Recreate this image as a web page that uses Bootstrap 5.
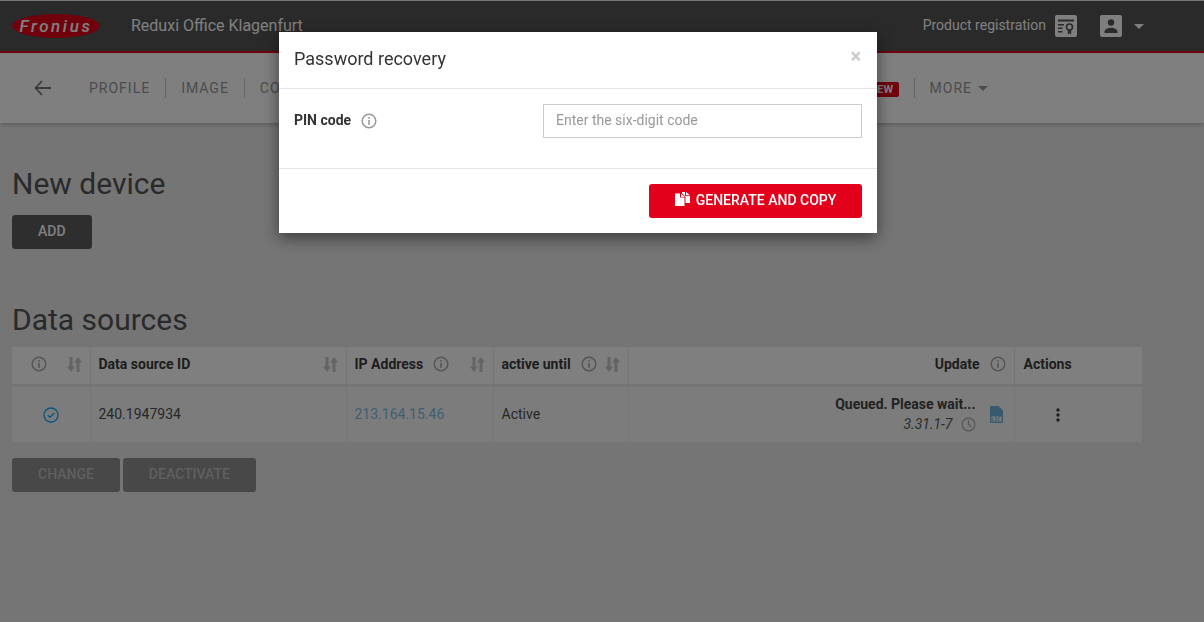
<!DOCTYPE html>
<html lang="en">
<head>
<meta charset="utf-8">
<title>Password recovery</title>
<link href="https://cdn.jsdelivr.net/npm/bootstrap@5.3.0/dist/css/bootstrap.min.css" rel="stylesheet">
<style>
html,body{height:100%;overflow:hidden}
body{font-family:Roboto,"Liberation Sans",sans-serif;font-size:14px;color:#505050;background:#ebebeb}
.top-bar{margin-top:1px;height:52px;background:#545454;border-bottom:2px solid #e2001a;padding:0 60px 0 12px;color:#fff}
.logo-oval{width:88px;height:24px;border-radius:50%;background:#e2001a;color:#fff;font-style:italic;font-weight:500;font-size:17px;letter-spacing:2.600px;line-height:24px;text-align:center;margin-right:31px}
.site-name{font-size:16px;color:#fff}
.reg-link{font-size:14px;color:#fff;margin-right:9px;padding-bottom:2px}
.tile{width:22px;height:22px;display:block}
.tile-gap{margin-left:23px}
.caret-down{width:0;height:0;border:5px solid transparent;border-top-color:currentColor;border-bottom:0}
.caret-gap{margin-left:12px;color:#fff}
.sub-bar{height:70px;background:#fff;padding-left:34px;padding-right:201px;box-shadow:0 2px 4px rgba(0,0,0,.2)}
.sub-link{font-size:14px;letter-spacing:1px;color:#999;text-decoration:none;padding:0 15px;border-right:1px solid #c8c8c8;line-height:20px;white-space:nowrap}
.sub-link.last{border-right:0}
.back-ico{width:18px;height:16px;margin-right:22px}
.new-tag{background:#e2001a;color:#fff;font-size:11px;font-weight:700;border-radius:2px;padding:1px 5px 1px 3px;letter-spacing:.3px;line-height:13px;margin-left:4px}
.more-caret{margin-left:6px;border-width:5.500px;border-bottom:0}
.page-main{padding:0 12px}
.sec-title{font-size:30px;font-weight:400;color:#555;line-height:36px;margin:0 0 13px}
.first-title{padding-top:43px}
.gap-title{margin-top:53px;margin-bottom:9px}
.btn-dark-sq{background:#5c5c5c;color:#fff;border:0;border-radius:3px;height:34px;font-size:14px;font-weight:500;padding:0 26px 1px;opacity:1}
.btn-dark-sq:disabled{background:#909090;color:#bebebe;opacity:1}
.src-table{width:1130px;table-layout:fixed;margin:0;--bs-table-bg:#fff;color:#505050}
.src-table th{height:38px;padding:0 8px 2px;font-weight:700;font-size:14px;border-right:1px solid #ececec;border-bottom:3px solid #ebebeb;vertical-align:middle;color:#3c3c3c}
.src-table td{height:57px;padding:0 8px;font-size:14px;border-right:1px solid #ececec;border-bottom:1px solid #ececec;vertical-align:middle;background:#f8f8f8}
.src-table th:last-child,.src-table td:last-child{border-right:0;padding-left:9px}
.ico-i{width:16px;height:16px;flex:none;color:#aaa;margin-left:10px}
.ico-first{margin-left:11px}
.ico-sort{width:15px;height:15px;flex:none;color:#c8c8c8}
.ip-link{color:#80bfe4;text-decoration:none}
.queued{font-weight:700;line-height:20px;color:#444}
.ver{font-style:italic;line-height:20px;color:#555}
.doc-ico{margin-left:14px;margin-right:3px;flex:none}
.dots-ico{margin-left:-42px}
.actions-note{margin-top:15px}
.modal-box{width:598px;max-width:598px;margin:32px 0 0 279px}
.modal-box .modal-content{border:0;border-radius:0;box-shadow:0 5px 15px rgba(0,0,0,.5);height:201px}
.modal-box .modal-header{height:57px;padding:0 15px 3px;border-bottom:1px solid #e5e5e5}
.modal-box .modal-title{font-size:18px;font-weight:400;color:#333}
.x-close{background:none;border:0;padding:0;font-size:20px;font-weight:700;line-height:1;color:#c8c8c8;margin-top:-6px;margin-right:1px}
.modal-box .modal-body{height:80px;flex:none;padding:15px;border-bottom:1px solid #e5e5e5}
.pin-label{font-weight:700;font-size:14px;color:#333;height:34px;padding-bottom:2px}
.pin-label .ico-i{color:#999;margin-top:2px}
.pin-input{width:319px;height:34px;border:1px solid #ccc;border-radius:0;font-size:14px;padding:0 12px 2px;color:#333}
.pin-input::placeholder{color:#999}
.pin-input:focus{box-shadow:none;border-color:#ccc}
.modal-box .modal-footer{padding:15px;border:0}
.btn-red{background:#e2001a;color:#fff;border:0;border-radius:3px;width:213px;height:34px;font-size:14px;font-weight:500;padding:0 0 2px;margin:0}
.btn-red:hover{background:#e2001a;color:#fff}
.copy-ico{margin-right:6px;margin-top:-2px}
</style>
</head>
<body>
<div class="top-bar d-flex align-items-center">
  <div class="logo-oval">Fronius</div>
  <div class="site-name">Reduxi Office Klagenfurt</div>
  <div class="ms-auto d-flex align-items-center">
    <span class="reg-link">Product registration</span>
    <svg class="tile" viewBox="0 0 22 22"><rect width="22" height="22" rx="2" fill="#fff"/><path d="M3 4.500h16v2H3zM3 9h6v1.600H3zM3 12.500h4.500v1.600H3zM3 16h4.500v1.600H3z" fill="#545454"/><circle cx="14.500" cy="12" r="3" fill="none" stroke="#545454" stroke-width="1.600"/><path d="M12.800 14.500v5l1.700-1.200 1.700 1.200v-5z" fill="#545454"/></svg>
    <svg class="tile tile-gap" viewBox="0 0 22 22"><rect width="22" height="22" rx="2" fill="#fff"/><circle cx="11" cy="7.500" r="3.200" fill="#545454"/><path d="M4.500 18v-1.500c0-2.500 4-3.800 6.500-3.800s6.500 1.300 6.500 3.800V18z" fill="#545454"/></svg>
    <span class="caret-down caret-gap"></span>
  </div>
</div>
<div class="sub-bar d-flex align-items-center">
  <svg class="back-ico" viewBox="0 0 18 16"><path d="M8 1 1.500 8 8 15M1.500 8H17" fill="none" stroke="#777" stroke-width="1.800"/></svg>
  <a class="sub-link" href="#">PROFILE</a>
  <a class="sub-link" href="#">IMAGE</a>
  <a class="sub-link" href="#">COMPONENTS</a>
  <a class="sub-link ms-auto" href="#">SERVICES <span class="new-tag">NEW</span></a>
  <a class="sub-link last d-flex align-items-center" href="#">MORE <span class="caret-down more-caret"></span></a>
</div>
<main class="page-main">
  <h2 class="sec-title first-title">New device</h2>
  <button class="btn btn-dark-sq" type="button">ADD</button>
  <h2 class="sec-title gap-title">Data sources</h2>
  <table class="table src-table">
    <colgroup><col style="width:78px"><col style="width:256px"><col style="width:147px"><col style="width:135px"><col style="width:386px"><col style="width:128px"></colgroup>
    <thead><tr>
      <th><div class="d-flex align-items-center"><svg class="ico-i ico-first" viewBox="0 0 16 16"><use href="#info"/></svg><svg class="ico-sort ms-auto" viewBox="0 0 15 15"><use href="#sort"/></svg></div></th>
      <th><div class="d-flex align-items-center">Data source ID<svg class="ico-sort ms-auto" viewBox="0 0 15 15"><use href="#sort"/></svg></div></th>
      <th><div class="d-flex align-items-center">IP Address<svg class="ico-i" viewBox="0 0 16 16"><use href="#info"/></svg><svg class="ico-sort ms-auto" viewBox="0 0 15 15"><use href="#sort"/></svg></div></th>
      <th><div class="d-flex align-items-center">active until<svg class="ico-i" viewBox="0 0 16 16"><use href="#info"/></svg><svg class="ico-sort ms-auto" viewBox="0 0 15 15"><use href="#sort"/></svg></div></th>
      <th><div class="d-flex align-items-center justify-content-end">Update<svg class="ico-i" viewBox="0 0 16 16"><use href="#info"/></svg></div></th>
      <th>Actions</th>
    </tr></thead>
    <tbody><tr>
      <td class="text-center"><svg width="16" height="16" viewBox="0 0 16 16"><circle cx="8" cy="8" r="7" fill="none" stroke="#1aa8ff" stroke-width="1.300"/><path d="M4.800 8.200 7 10.300 11.200 6" fill="none" stroke="#1aa8ff" stroke-width="1.400"/></svg></td>
      <td>240.1947934</td>
      <td><a class="ip-link" href="#">213.164.15.46</a></td>
      <td>Active</td>
      <td><div class="d-flex justify-content-end align-items-center">
        <div class="text-end">
          <div class="queued">Queued. Please wait...</div>
          <div class="ver d-flex align-items-center justify-content-end">3.31.1-7<svg class="ms-2" width="15" height="15" viewBox="0 0 16 16"><circle cx="8" cy="8" r="6.800" fill="none" stroke="#aaa" stroke-width="1.300"/><path d="M8 3.800V8l3 2.500" fill="none" stroke="#aaa" stroke-width="1.300"/></svg></div>
        </div>
        <svg class="doc-ico" width="13" height="17" viewBox="0 0 13 17"><path d="M0 1a1 1 0 0 1 1-1h7.500L13 4.500V16a1 1 0 0 1-1 1H1a1 1 0 0 1-1-1z" fill="#6fb4dc"/><rect x="1.500" y="10.500" width="10" height="5" fill="#f8f8f8"/><path d="M2.500 11.500v3h1.500M5.200 11.500h1.500v3H5.200zM10 11.500H8.500v3H10" fill="none" stroke="#6fb4dc" stroke-width=".7"/></svg>
      </div></td>
      <td class="text-center"><svg class="dots-ico" width="4" height="14" viewBox="0 0 4 14"><circle cx="2" cy="2" r="1.700" fill="#3c3c3c"/><circle cx="2" cy="7" r="1.700" fill="#3c3c3c"/><circle cx="2" cy="12" r="1.700" fill="#3c3c3c"/></svg></td>
    </tr></tbody>
  </table>
  <div class="d-flex actions-note" style="gap:3px">
    <button class="btn btn-dark-sq" type="button" disabled>CHANGE</button>
    <button class="btn btn-dark-sq" type="button" disabled>DEACTIVATE</button>
  </div>
</main>
<svg width="0" height="0" class="position-absolute"><defs>
  <symbol id="info" viewBox="0 0 16 16"><circle cx="8" cy="8" r="6.800" fill="none" stroke="currentColor" stroke-width="1.500"/><rect x="7.200" y="7" width="1.600" height="4.800" fill="currentColor"/><rect x="7.200" y="4.200" width="1.600" height="1.600" fill="currentColor"/></symbol>
  <symbol id="sort" viewBox="0 0 15 15"><path d="M2.500 0h3v9.500H8L4 15 0 9.500h2.500zM9.500 15V5.500H7L11 0l4 5.500h-2.500V15z" fill="currentColor"/></symbol>
</defs></svg>
<div class="modal-backdrop show"></div>
<div class="modal d-block" tabindex="-1">
  <div class="modal-dialog modal-box">
    <div class="modal-content">
      <div class="modal-header">
        <h5 class="modal-title">Password recovery</h5>
        <button class="x-close ms-auto" type="button">&times;</button>
      </div>
      <div class="modal-body d-flex align-items-start">
        <label class="pin-label d-flex align-items-center">PIN code<svg class="ico-i" viewBox="0 0 16 16"><use href="#info"/></svg></label>
        <input class="form-control pin-input ms-auto" type="text" placeholder="Enter the six-digit code">
      </div>
      <div class="modal-footer">
        <button class="btn btn-red d-flex align-items-center justify-content-center" type="button">
          <svg class="copy-ico" width="15" height="14" viewBox="0 0 15 14"><path d="M0 1.500h5v4h4.500V14H0zM6 1.500l3.500 3.500H6zM7 0h3v4h5v7h-4.500V5L7 1.200zM11 0l4 3.200h-4z" fill="#fff"/></svg>GENERATE AND COPY
        </button>
      </div>
    </div>
  </div>
</div>
<script src="https://cdn.jsdelivr.net/npm/bootstrap@5.3.0/dist/js/bootstrap.bundle.min.js"></script>
</body>
</html>
